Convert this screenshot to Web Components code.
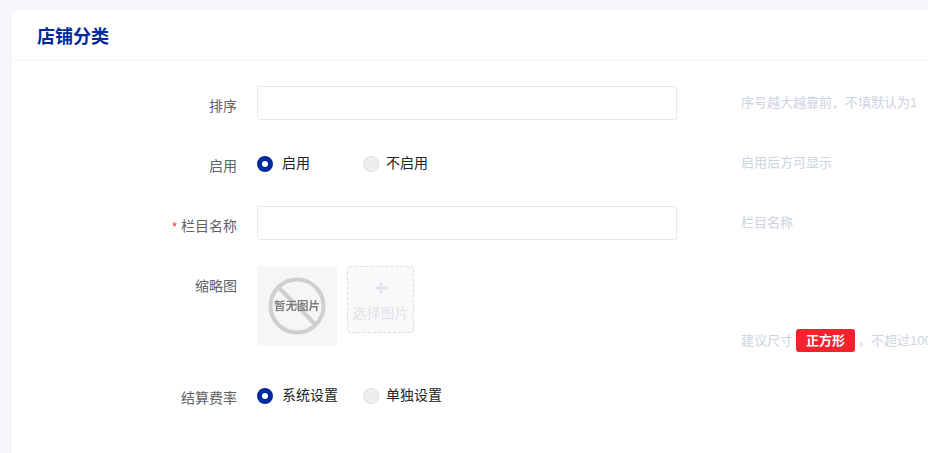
<!DOCTYPE html>
<html lang="zh">
<head>
<meta charset="utf-8">
<title>店铺分类</title>
<style>
  html, body { margin: 0; height: 100%; overflow: hidden; background: #f4f6fa; }
  body { font-family: "Liberation Sans", "Noto Sans CJK SC", sans-serif; font-size: 14px; }
</style>
</head>
<body>
<shop-card heading="店铺分类">
  <form-row label="排序" hint="序号越大越靠前，不填默认为1">
    <text-box></text-box>
  </form-row>
  <form-row label="启用" hint="启用后方可显示">
    <radio-group>
      <radio-item checked wide>启用</radio-item>
      <radio-item>不启用</radio-item>
    </radio-group>
  </form-row>
  <form-row label="栏目名称" required hint="栏目名称">
    <text-box></text-box>
  </form-row>
  <form-row label="缩略图" tall>
    <image-picker></image-picker>
    <span slot="hint">建议尺寸<hint-tag>正方形</hint-tag>，不超过100KB</span>
  </form-row>
  <form-row label="结算费率">
    <radio-group>
      <radio-item checked>系统设置</radio-item>
      <radio-item>单独设置</radio-item>
    </radio-group>
  </form-row>
</shop-card>

<script>
class ShopCard extends HTMLElement {
  constructor() {
    super();
    this.attachShadow({ mode: 'open' });
    this.shadowRoot.innerHTML = `
      <style>
        :host {
          display: block;
          width: 1300px;
          height: 600px;
          margin: 10px 0 0 12px;
          background: #fff;
          border-radius: 6px;
        }
        .head {
          height: 50px;
          padding-left: 25px;
          display: flex;
          align-items: center;
          border-bottom: 1px solid #f3f3f5;
          color: #00299c;
          font-size: 18px;
          font-weight: bold;
        }
        .body { padding-top: 25px; }
      </style>
      <div class="head">${this.getAttribute('heading')}</div>
      <div class="body"><slot></slot></div>
    `;
  }
}

class FormRow extends HTMLElement {
  constructor() {
    super();
    const hint = this.getAttribute('hint') || '';
    this.attachShadow({ mode: 'open' });
    this.shadowRoot.innerHTML = `
      <style>
        :host {
          display: flex;
          min-height: 34px;
          margin-bottom: 26px;
        }
        :host([tall]) { height: 86px; }
        .label {
          width: 225px;
          flex: none;
          padding-top: 10px;
          box-sizing: border-box;
          text-align: right;
          font-size: 14px;
          line-height: 20px;
          color: #606266;
        }
        .star { color: #f5222d; font-size: 12px; margin-right: 4px; }
        .ctrl { width: 420px; margin-left: 20px; flex: none; }
        .hint {
          margin-left: 64px;
          padding-top: 8px;
          font-size: 13px;
          line-height: 18px;
          color: #cdd2e0;
          white-space: nowrap;
        }
        :host([tall]) .hint { padding-top: 0; align-self: flex-end; line-height: 23px; }
      </style>
      <div class="label">${this.hasAttribute('required') ? '<span class="star">*</span>' : ''}${this.getAttribute('label')}</div>
      <div class="ctrl"><slot></slot></div>
      <div class="hint"><slot name="hint">${hint}</slot></div>
    `;
  }
}

class TextBox extends HTMLElement {
  constructor() {
    super();
    this.attachShadow({ mode: 'open' });
    this.shadowRoot.innerHTML = `
      <style>
        :host { display: block; }
        input {
          display: block;
          width: 100%;
          height: 34px;
          box-sizing: border-box;
          border: 1px solid #e8e8ea;
          border-radius: 3px;
          background: #fff;
          outline: none;
          padding: 0 10px;
        }
      </style>
      <input type="text">
    `;
  }
}

class RadioGroup extends HTMLElement {
  constructor() {
    super();
    this.attachShadow({ mode: 'open' });
    this.shadowRoot.innerHTML = `
      <style>
        :host { display: flex; height: 34px; align-items: center; }
      </style>
      <slot></slot>
    `;
  }
}

class RadioItem extends HTMLElement {
  constructor() {
    super();
    this.attachShadow({ mode: 'open' });
    this.shadowRoot.innerHTML = `
      <style>
        :host {
          display: flex;
          align-items: center;
          gap: 7px;
          margin-right: 25px;
          margin-top: 2px;
          font-size: 14px;
          color: #222;
        }
        :host([checked]) { gap: 9px; }
        :host([wide]) { width: 81px; }
        .dot {
          width: 16px;
          height: 16px;
          box-sizing: border-box;
          flex: none;
          border-radius: 50%;
          border: 1px solid #dcdfe6;
          background: #eee;
        }
        :host([checked]) .dot {
          border: 5px solid #00299c;
          background: #fff;
        }
        span { position: relative; top: -2px; }
      </style>
      <div class="dot"></div><span><slot></slot></span>
    `;
  }
}

class ImagePicker extends HTMLElement {
  constructor() {
    super();
    this.attachShadow({ mode: 'open' });
    this.shadowRoot.innerHTML = `
      <style>
        :host { display: flex; gap: 10px; align-items: flex-start; }
        .thumb {
          width: 80px;
          height: 80px;
          border-radius: 3px;
          background: #f6f6f6;
          display: grid;
          place-items: center;
          overflow: hidden;
        }
        .blur { position: relative; width: 60px; height: 60px; filter: blur(.6px); display: grid; place-items: center; }
        svg { position: absolute; inset: 0; }
        .none { position: relative; top: -1px; font-size: 11.5px; font-weight: bold; color: #7f7f7f; white-space: nowrap; }
        .pick {
          width: 67px;
          height: 67px;
          box-sizing: border-box;
          border: 1px dashed #dcdfe2;
          border-radius: 3px;
          background: #f9f9f9;
          display: flex;
          flex-direction: column;
          align-items: center;
          color: #dfe3ea;
          font-size: 14px;
        }
        .plus { height: 22px; margin-top: 14px; }
        .plus svg { position: static; display: block; }
        .txt { line-height: 20px; white-space: nowrap; }
      </style>
      <div class="thumb">
        <div class="blur">
          <svg width="60" height="60" viewBox="0 0 60 60" fill="none" stroke="#cfcfcf" stroke-width="4">
            <circle cx="30" cy="30" r="26.5"/>
            <path d="M11 11L49 49"/>
          </svg>
          <span class="none">暂无图片</span>
        </div>
      </div>
      <div class="pick">
        <div class="plus"><svg width="14" height="14" viewBox="0 0 14 14"><path d="M7 1V13M1 7H13" stroke="#dfe3ea" stroke-width="2.4" fill="none"/></svg></div>
        <div class="txt">选择图片</div>
      </div>
    `;
  }
}

class HintTag extends HTMLElement {
  constructor() {
    super();
    this.attachShadow({ mode: 'open' });
    this.shadowRoot.innerHTML = `
      <style>
        :host {
          display: inline-block;
          height: 23px;
          line-height: 23px;
          padding: 0 10px;
          margin: 0 3px;
          border-radius: 3px;
          background: #f5222d;
          color: #fff;
          font-size: 13px;
          font-weight: bold;
          vertical-align: top;
        }
      </style>
      <slot></slot>
    `;
  }
}

customElements.define('shop-card', ShopCard);
customElements.define('form-row', FormRow);
customElements.define('text-box', TextBox);
customElements.define('radio-group', RadioGroup);
customElements.define('radio-item', RadioItem);
customElements.define('image-picker', ImagePicker);
customElements.define('hint-tag', HintTag);
</script>
</body>
</html>
